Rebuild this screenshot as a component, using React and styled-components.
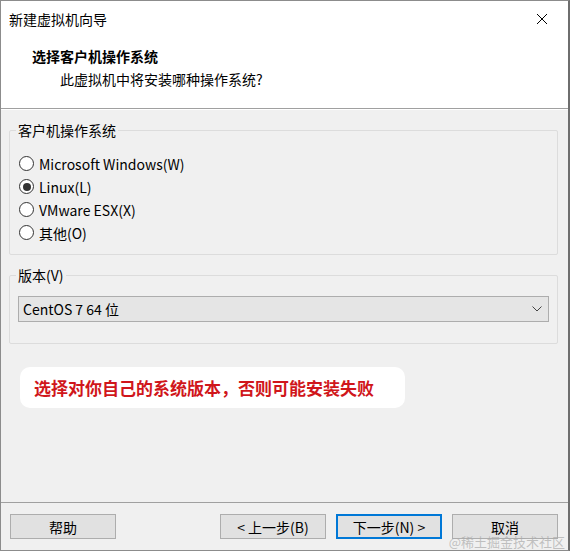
import React from 'react';
import styled, { createGlobalStyle } from 'styled-components';

const GlobalStyle = createGlobalStyle`
  html, body {
    margin: 0;
    padding: 0;
    background: #f0f0f0;
  }
  * {
    box-sizing: border-box;
  }
`;

const Window = styled.div`
  position: relative;
  width: 570px;
  height: 551px;
  display: flex;
  flex-direction: column;
  background: #f0f0f0;
  border: 1px solid #8c8c8c;
  border-right: 2px solid #6e6e6e;
  font-family: "Noto Sans CJK SC", "Noto Sans", sans-serif;
  font-size: 14px;
  color: #000;
`;

const TitleBar = styled.div`
  height: 36px;
  display: flex;
  align-items: center;
  justify-content: space-between;
  padding: 0 20px 0 8px;
  background: #fff;
  span {
    font-size: 14px;
  }
`;

const Header = styled.div`
  height: 72px;
  background: #fff;
  padding: 8px 0 0 31px;
  border-bottom: 1px solid #a0a0a0;
  box-shadow: 0 1px 0 #fff;
  h1 {
    margin: 0;
    font-size: 14px;
    font-weight: 700;
    line-height: 22px;
  }
  p {
    margin: 1px 0 0 28px;
    font-size: 14px;
    line-height: 22px;
  }
`;

const Body = styled.div`
  flex: 1;
  padding: 11px 10px 0 8px;
  display: flex;
  flex-direction: column;
`;

const Group = styled.fieldset`
  margin: ${p => p.$top}px 0 0 0;
  padding: ${p => p.$pad};
  border: 1px solid #dcdcdc;
  border-radius: 2px;
  min-width: 0;
  legend {
    padding: 0 2px;
    margin-left: -2px;
    font-size: 14px;
    line-height: 20px;
  }
`;

const RadioRow = styled.label`
  height: 23px;
  display: flex;
  align-items: center;
  gap: 5px;
  padding-left: 1px;
  font-size: 14px;
`;

const RadioDot = styled.span`
  width: 15px;
  height: 15px;
  border-radius: 50%;
  border: 1px solid #333;
  background: #fff;
  display: flex;
  align-items: center;
  justify-content: center;
  &::after {
    content: '';
    width: 8px;
    height: 8px;
    border-radius: 50%;
    background: ${p => (p.$checked ? '#333' : 'transparent')};
  }
`;

const Select = styled.div`
  height: 26px;
  display: flex;
  align-items: center;
  justify-content: space-between;
  padding: 0 6px 0 4px;
  background: #e5e5e5;
  border: 1px solid #adadad;
  font-size: 14px;
`;

const Note = styled.div`
  align-self: flex-start;
  margin: 23px 0 0 11px;
  width: 385px;
  height: 41px;
  display: flex;
  align-items: center;
  padding-left: 14px;
  background: #fff;
  border-radius: 10px;
  color: #d0161b;
  font-size: 17px;
  font-weight: 700;
`;

const Footer = styled.div`
  height: 48px;
  border-top: 1px solid #a0a0a0;
  display: flex;
  align-items: flex-start;
  padding: 11px 10px 0 9px;
  gap: 10px;
`;

const Button = styled.button`
  width: 106px;
  height: 25px;
  margin-left: ${p => (p.$push ? 'auto' : '0')};
  background: #e1e1e1;
  border: ${p => (p.$primary ? '2px solid #0078d7' : '1px solid #adadad')};
  font-family: inherit;
  font-size: 14px;
  color: #000;
  padding: 0;
  line-height: 1;
`;

const Watermark = styled.div`
  position: absolute;
  right: 3px;
  bottom: 0;
  font-size: 13px;
  line-height: 16px;
  color: rgba(170, 170, 170, 0.7);
  pointer-events: none;
`;

const CloseIcon = () => (
  <svg width="12" height="12" viewBox="0 0 12 12">
    <path d="M1 1 L11 11 M11 1 L1 11" stroke="#000" strokeWidth="1" fill="none" />
  </svg>
);

const Chevron = () => (
  <svg width="10" height="6" viewBox="0 0 10 6">
    <path d="M0.5 0.5 L5 5 L9.5 0.5" stroke="#444" strokeWidth="1" fill="none" />
  </svg>
);

const options = [
  { label: 'Microsoft Windows(W)', checked: false },
  { label: 'Linux(L)', checked: true },
  { label: 'VMware ESX(X)', checked: false },
  { label: '其他(O)', checked: false },
];

export default function App() {
  return (
    <Window>
      <GlobalStyle />
      <TitleBar>
        <span>新建虚拟机向导</span>
        <CloseIcon />
      </TitleBar>
      <Header>
        <h1>选择客户机操作系统</h1>
        <p>此虚拟机中将安装哪种操作系统?</p>
      </Header>
      <Body>
        <Group $top={0} $pad="12px 8px 10px 8px">
          <legend>客户机操作系统</legend>
          {options.map(o => (
            <RadioRow key={o.label}>
              <RadioDot $checked={o.checked} />
              {o.label}
            </RadioRow>
          ))}
        </Group>
        <Group $top={10} $pad="11px 8px 21px 8px">
          <legend>版本(V)</legend>
          <Select>
            <span>CentOS 7 64 位</span>
            <Chevron />
          </Select>
        </Group>
        <Note>选择对你自己的系统版本，否则可能安装失败</Note>
      </Body>
      <Footer>
        <Button>帮助</Button>
        <Button $push>&lt; 上一步(B)</Button>
        <Button $primary>下一步(N) &gt;</Button>
        <Button>取消</Button>
      </Footer>
      <Watermark>@稀土掘金技术社区</Watermark>
    </Window>
  );
}
